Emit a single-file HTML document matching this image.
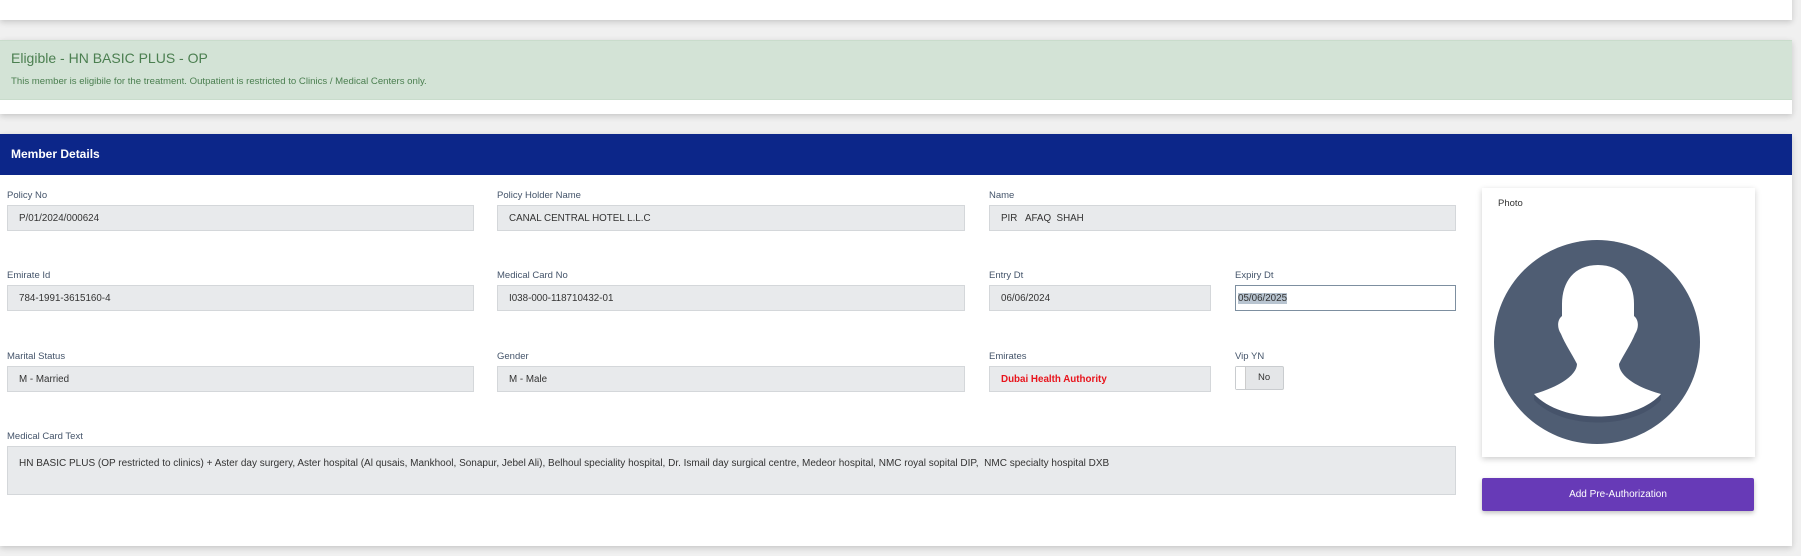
<!DOCTYPE html>
<html><head><meta charset="utf-8"><style>
*{box-sizing:border-box;margin:0;padding:0}
html,body{width:1801px;height:556px;overflow:hidden}
body{background:#f0f0f0;font-family:"Liberation Sans",Arial,sans-serif;position:relative}
.abs{position:absolute}
.panel{background:#fff;box-shadow:0 2px 6px rgba(0,0,0,.18)}
.lbl{position:absolute;font-size:9.5px;color:#44546a}
.inp{position:absolute;background:#e8eaec;border:1px solid #d4d7da;font-size:9.8px;color:#333;padding-left:11px;display:flex;align-items:center;height:26px}
</style></head><body>
<div class="abs panel" style="left:0;top:-10px;width:1792px;height:30px"></div>
<div class="abs panel" style="left:0;top:40px;width:1792px;height:74px"></div>
<div class="abs" style="left:0;top:40px;width:1792px;height:60px;background:#d3e3d6;border-top:1px solid #c9dccc;border-bottom:1px solid #c9dccc"></div>
<div class="abs" style="left:11px;top:50px;font-size:14px;color:#4b7f50">Eligible - HN BASIC PLUS - OP</div>
<div class="abs" style="left:11px;top:76px;font-size:9.6px;color:#4b7f50">This member is eligibile for the treatment. Outpatient is restricted to Clinics / Medical Centers only.</div>

<div class="abs panel" style="left:0;top:134px;width:1792px;height:412px"></div>
<div class="abs" style="left:0;top:134px;width:1792px;height:41px;background:#0c2689"></div>
<div class="abs" style="left:11px;top:147px;font-size:12px;font-weight:bold;color:#fff">Member Details</div>

<div class="lbl" style="left:7px;top:190px">Policy No</div>
<div class="inp" style="left:7px;top:205px;width:467px">P/01/2024/000624</div>
<div class="lbl" style="left:497px;top:190px">Policy Holder Name</div>
<div class="inp" style="left:497px;top:205px;width:468px">CANAL CENTRAL HOTEL L.L.C</div>
<div class="lbl" style="left:989px;top:190px">Name</div>
<div class="inp" style="left:989px;top:205px;width:467px;white-space:pre">PIR   AFAQ  SHAH</div>

<div class="lbl" style="left:7px;top:270px">Emirate Id</div>
<div class="inp" style="left:7px;top:285px;width:467px">784-1991-3615160-4</div>
<div class="lbl" style="left:497px;top:270px">Medical Card No</div>
<div class="inp" style="left:497px;top:285px;width:468px">I038-000-118710432-01</div>
<div class="lbl" style="left:989px;top:270px">Entry Dt</div>
<div class="inp" style="left:989px;top:285px;width:222px">06/06/2024</div>
<div class="lbl" style="left:1235px;top:270px">Expiry Dt</div>
<div class="inp" style="left:1235px;top:285px;width:221px;background:#fff;border:1px solid #7d8fa0;padding-left:2px"><span style="background:#b8c4d0">05/06/2025</span></div>

<div class="lbl" style="left:7px;top:351px">Marital Status</div>
<div class="inp" style="left:7px;top:366px;width:467px">M - Married</div>
<div class="lbl" style="left:497px;top:351px">Gender</div>
<div class="inp" style="left:497px;top:366px;width:468px">M - Male</div>
<div class="lbl" style="left:989px;top:351px">Emirates</div>
<div class="inp" style="left:989px;top:366px;width:222px;color:#e8141c;font-weight:bold">Dubai Health Authority</div>
<div class="lbl" style="left:1235px;top:351px">Vip YN</div>
<div class="abs" style="left:1235px;top:366px;width:49px;height:24px;border:1px solid #c9cccf;background:#e4e6e8;border-radius:2px"><div class="abs" style="left:0;top:0;width:10px;height:22px;background:#fff;border-right:1px solid #ccc"></div><div class="abs" style="left:22px;top:5px;font-size:9.5px;color:#333">No</div></div>

<div class="lbl" style="left:7px;top:431px">Medical Card Text</div>
<div class="abs" style="left:7px;top:446px;width:1449px;height:49px;background:#e8eaec;border:1px solid #d4d7da;font-size:10px;color:#333;padding:11px 11px;white-space:pre">HN BASIC PLUS (OP restricted to clinics) + Aster day surgery, Aster hospital (Al qusais, Mankhool, Sonapur, Jebel Ali), Belhoul speciality hospital, Dr. Ismail day surgical centre, Medeor hospital, NMC royal sopital DIP,  NMC specialty hospital DXB</div>

<div class="abs" style="left:1482px;top:188px;width:273px;height:269px;background:#fff;box-shadow:0 2px 6px rgba(0,0,0,.2)"></div>
<div class="abs" style="left:1498px;top:198px;font-size:9.5px;color:#333">Photo</div>
<svg class="abs" style="left:1482px;top:188px" width="273" height="269" viewBox="0 0 273 269">
<ellipse cx="115" cy="154" rx="103" ry="102" fill="#4f5d73"/>
<path d="M52 212 C80 242 152 242 179 212 L179 206 C152 236 80 236 52 206 Z" fill="#46536a"/>
<path d="M116 77 C92 77 80 94 80 116 L80 128 C75 132 75 140 79 146 C83 156 90 166 95 176 C95 186 80 198 52 206 C80 236 152 236 179 206 C150 198 137 186 137 176 C142 166 149 156 153 146 C157 140 157 132 152 128 L152 116 C152 94 140 77 116 77 Z" fill="#fff"/>
</svg>
<div class="abs" style="left:1482px;top:478px;width:272px;height:33px;background:#673ab7;border-radius:2px;box-shadow:0 2px 5px rgba(0,0,0,.25);color:#fff;font-size:10px;display:flex;align-items:center;justify-content:center">Add Pre-Authorization</div>
</body></html>
